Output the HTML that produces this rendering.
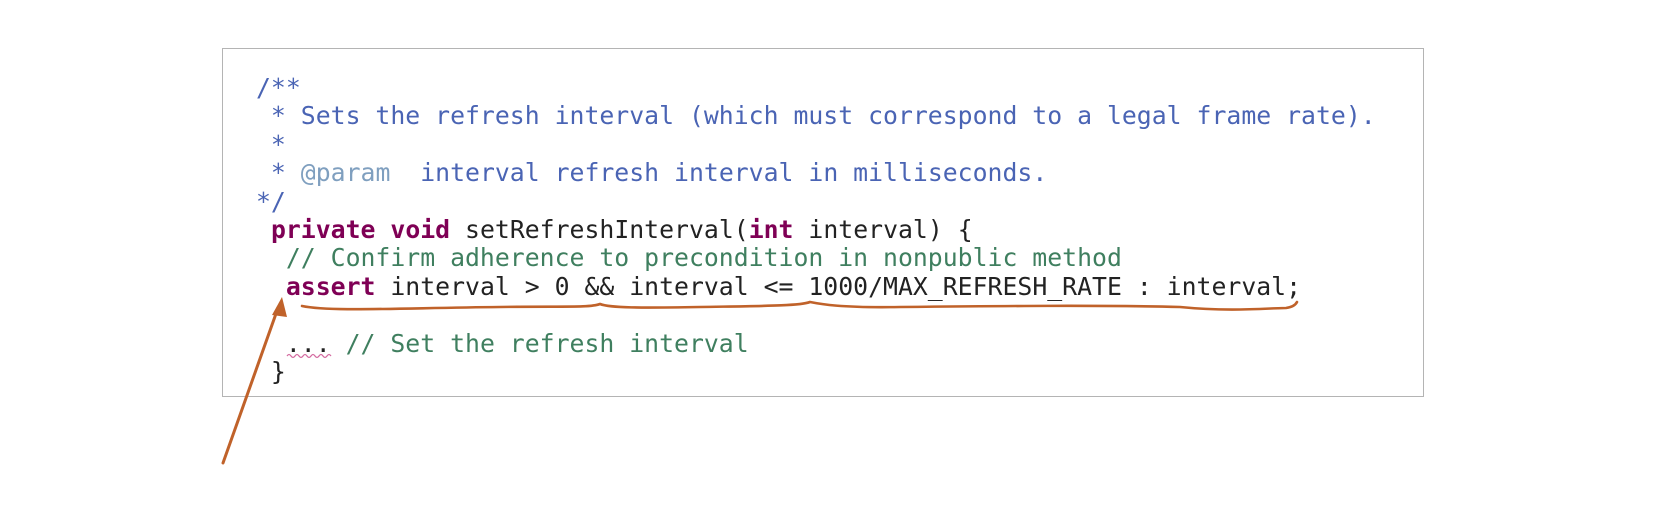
<!DOCTYPE html>
<html><head><meta charset="utf-8"><style>
html,body{margin:0;padding:0;background:#fff;width:1662px;height:516px;overflow:hidden;position:relative}
.box{position:absolute;left:222px;top:48px;width:1202px;height:349px;border:1.5px solid #b4b4b4;box-sizing:border-box}
pre{position:absolute;left:256px;top:74px;margin:0;font-family:"DejaVu Sans Mono","Liberation Mono",monospace;font-size:24.8px;line-height:28.4px;color:#222}
.jd{color:#4a64b4}.tg{color:#7f9fbf}.kw{color:#7f0055;font-weight:bold}.cm{color:#3f7f5f}
</style></head><body>
<div class="box"></div>
<pre><span class="jd">/**
 * Sets the refresh interval (which must correspond to a legal frame rate).
 *
 * <span class="tg">@param</span>  interval refresh interval in milliseconds.
*/</span>
 <span class="kw">private</span> <span class="kw">void</span> setRefreshInterval(<span class="kw">int</span> interval) {
  <span class="cm">// Confirm adherence to precondition in nonpublic method</span>
  <span class="kw">assert</span> interval &gt; 0 &amp;&amp; interval &lt;= 1000/MAX_REFRESH_RATE : interval;

  ... <span class="cm">// Set the refresh interval</span>
 }</pre>
<svg width="1662" height="516" style="position:absolute;left:0;top:0">
<path d="M287 356 q2 -3 4 0 t4 0 t4 0 t4 0 t4 0 t4 0 t4 0 t4 0 t4 0 t4 0 t4 0" fill="none" stroke="#d46aa0" stroke-width="1.2"/>
<path d="M302 306 C330 312 400 308 500 307 C560 306 590 308 600 304 C610 308 640 308 700 307 C760 306 800 306 810 302 C820 304 840 308 900 307 C1000 306 1100 305 1180 307 C1230 312 1270 308 1286 308 C1293 307 1296 304 1297 302" fill="none" stroke="#c0622a" stroke-width="2.6" stroke-linecap="round"/>
<line x1="223" y1="463" x2="278" y2="308" stroke="#c0622a" stroke-width="3" stroke-linecap="round"/>
<polygon points="282,297 272,315 287,317" fill="#c0622a"/>
</svg>
</body></html>
